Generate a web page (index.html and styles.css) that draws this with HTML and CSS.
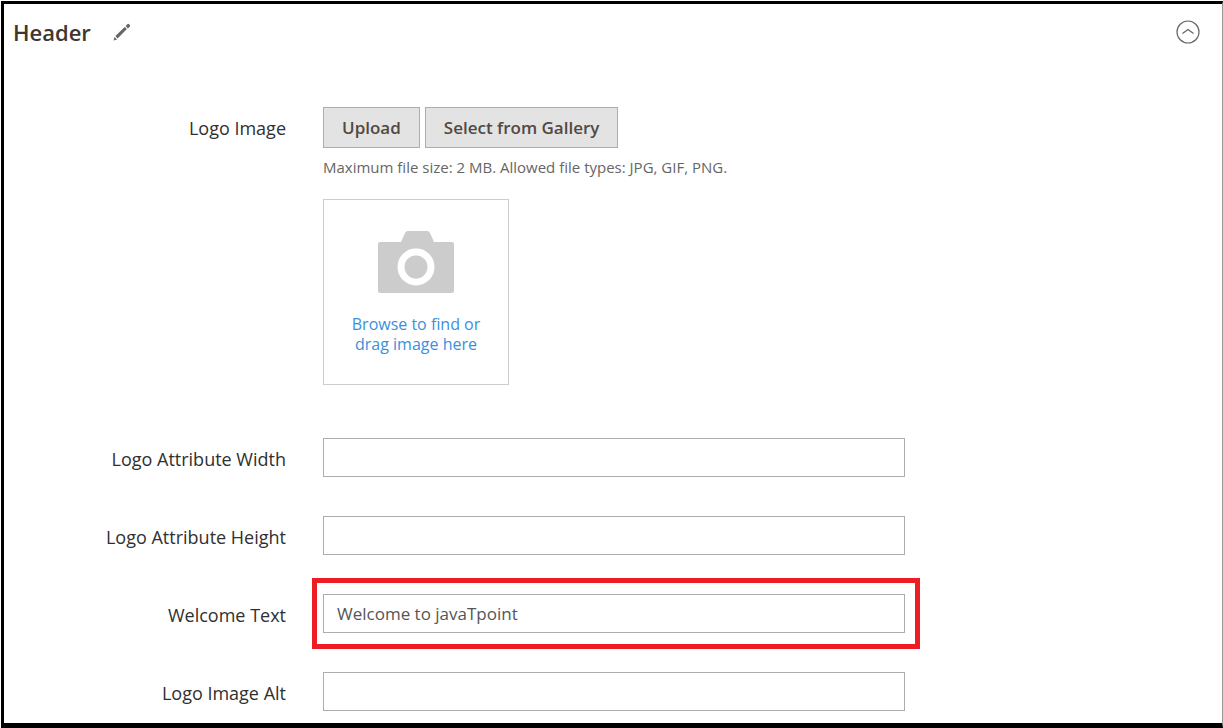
FILE: index.html
```html
<!DOCTYPE html>
<html lang="en">
<head>
    <meta charset="UTF-8">
    <meta name="viewport" content="width=device-width, initial-scale=1.0">
    <title>Header</title>
    <link rel="stylesheet" href="styles.css">
</head>
<body>
    <form class="panel">
        <div class="panel-header">
            <h2 class="panel-title">Header</h2>
            <svg class="icon-pencil" width="18" height="18" viewBox="0 0 18 18" fill="#666">
                <path d="M0.500 17.500l1.100-3.600 2.400 2.500z"/>
                <path d="M2.400 13.100l9.300-9.200 2.200 2.200-9.300 9.400z"/>
                <path d="M12.600 3l1.800-1.800q.9-.7 1.700 0l.7.800q.7.900 0 1.700l-1.900 1.700z"/>
            </svg>
            <button class="toggle" type="button" aria-label="Collapse section">
                <svg width="24" height="24" viewBox="0 0 24 24" fill="none" stroke="#666">
                    <circle cx="12" cy="12" r="11" stroke-width="1.200"/>
                    <path d="M6.500 13.500L12 9.500l5.500 4" stroke-width="1.300"/>
                </svg>
            </button>
        </div>

        <div class="fields">
            <div class="field">
                <label class="label" for="logoFile">Logo Image</label>
                <div class="control">
                    <div class="buttons">
                        <button class="btn" type="button" id="uploadBtn">Upload</button>
                        <button class="btn" type="button">Select from Gallery</button>
                    </div>
                    <p class="note">Maximum file size: 2 MB. Allowed file types: JPG, GIF, PNG.</p>
                    <button class="uploader" type="button" id="logoFile">
                        <svg width="76" height="64" viewBox="0 0 76 64">
                            <path fill="#ccc" d="M2 12h21l4-9q1-2 3-2h19q2 0 3 2l4 9h18q2 0 2 2v47q0 2-2 2H2q-2 0-2-2V14q0-2 2-2z"/>
                            <circle cx="38" cy="37" r="15" fill="none" stroke="#fff" stroke-width="7"/>
                        </svg>
                        <span class="uploader-text">Browse to find or<br>drag image here</span>
                    </button>
                </div>
            </div>

            <div class="field">
                <label class="label" for="logoWidth">Logo Attribute Width</label>
                <div class="control">
                    <input class="input" type="text" id="logoWidth">
                </div>
            </div>

            <div class="field">
                <label class="label" for="logoHeight">Logo Attribute Height</label>
                <div class="control">
                    <input class="input" type="text" id="logoHeight">
                </div>
            </div>

            <div class="field">
                <label class="label" for="welcome">Welcome Text</label>
                <div class="control highlight">
                    <input class="input" type="text" id="welcome" value="Welcome to javaTpoint">
                </div>
            </div>

            <div class="field">
                <label class="label" for="logoAlt">Logo Image Alt</label>
                <div class="control">
                    <input class="input" type="text" id="logoAlt">
                </div>
            </div>
        </div>
    </form>
</body>
</html>
```
FILE: styles.css
```css
* {
    box-sizing: border-box;
}

body {
    margin: 0;
    padding: 1px 0 0 1px;
    font-family: "Open Sans", "Noto Sans", sans-serif;
    font-size: 17px;
    line-height: 24px;
    color: #303030;
    background-color: #fff;
}

.panel {
    min-height: calc(100vh - 1px);
    border: 3px solid #000;
    border-right: 1px solid #999;
    border-bottom-width: 5px;
}

.panel-header {
    display: flex;
    align-items: center;
    padding: 16px 22px 0 9px;
}

.panel-title {
    margin: 0 22px 0 0;
    font-size: 22px;
    font-weight: 600;
    color: #41362f;
}

.toggle {
    display: flex;
    margin-left: auto;
    padding: 0;
    border: none;
    background: none;
    cursor: pointer;
}

.fields {
    display: flex;
    flex-direction: column;
    gap: 39px;
    padding: 63px 0 11px;
}

.field {
    display: grid;
    grid-template-columns: 282fr 582fr 280fr;
    column-gap: 37px;
}

.label {
    padding-top: 9px;
    font-size: 18px;
    text-align: right;
}

.control {
    position: relative;
}

.buttons {
    display: flex;
    gap: 5px;
}

.btn {
    height: 41px;
    padding: 0 18px;
    border: 1px solid #adadad;
    background-color: #e3e3e3;
    font: 600 17px "Open Sans", "Noto Sans", sans-serif;
    color: #514943;
    cursor: pointer;
}

.note {
    margin: 7px 0 20px;
    font-size: 15px;
    color: #666;
}

.uploader {
    display: flex;
    flex-direction: column;
    align-items: center;
    width: 186px;
    height: 186px;
    margin-bottom: 14px;
    padding: 30px 0 0;
    border: 1px solid #ccc;
    background-color: #fff;
    font: inherit;
    cursor: pointer;
}

.uploader-text {
    margin-top: 20px;
    font-size: 16px;
    line-height: 20px;
    color: #3b8fdd;
}

.input {
    display: block;
    width: 100%;
    height: 39px;
    padding: 0 13px;
    border: 1px solid #adadad;
    background-color: #fff;
    font: inherit;
    color: #555;
}

/* Red frame around the welcome text box */
.highlight::after {
    content: "";
    position: absolute;
    inset: -16px -15px -16px -11px;
    border: 5px solid #ee1c25;
    pointer-events: none;
}
```
